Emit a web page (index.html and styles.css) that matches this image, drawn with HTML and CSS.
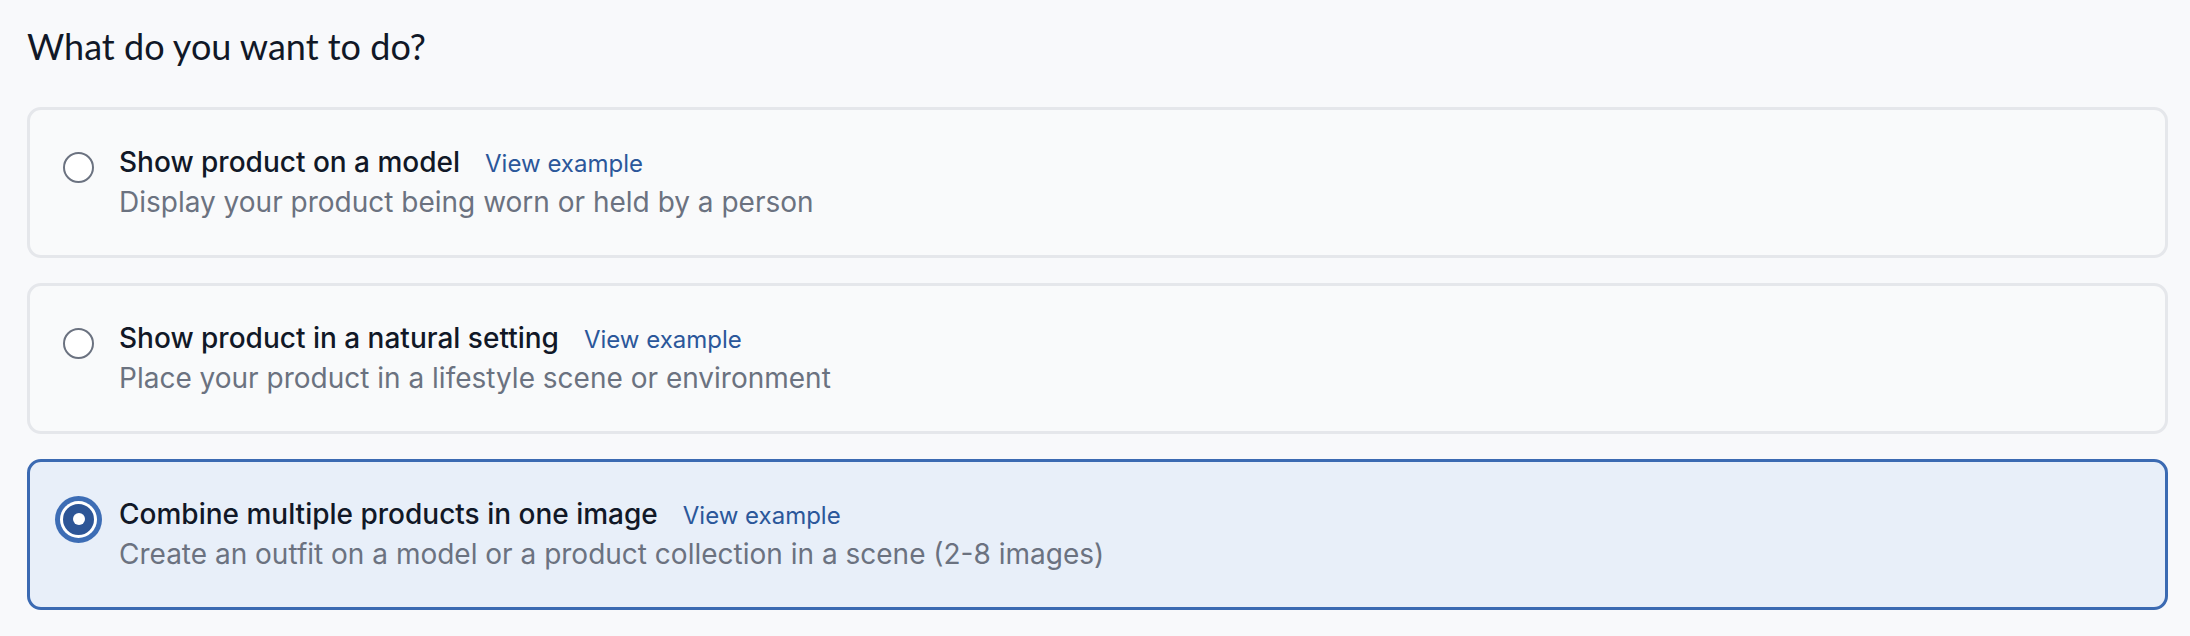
FILE: index.html
```html
<!DOCTYPE html>
<html lang="en">
<head>
<meta charset="utf-8">
<title>What do you want to do?</title>
<link rel="stylesheet" href="styles.css">
</head>
<body>
<main class="page">
  <h1 class="question">What do you want to do?</h1>
  <div class="options" role="radiogroup">
    <label class="option">
      <span class="radio"></span>
      <span class="option-body">
        <span class="option-head">
          <span class="option-title">Show product on a model</span>
          <a class="option-link" href="#">View example</a>
        </span>
        <span class="option-desc">Display your product being worn or held by a person</span>
      </span>
    </label>
    <label class="option">
      <span class="radio"></span>
      <span class="option-body">
        <span class="option-head">
          <span class="option-title">Show product in a natural setting</span>
          <a class="option-link" href="#">View example</a>
        </span>
        <span class="option-desc">Place your product in a lifestyle scene or environment</span>
      </span>
    </label>
    <label class="option option--selected">
      <span class="radio radio--checked"></span>
      <span class="option-body">
        <span class="option-head">
          <span class="option-title">Combine multiple products in one image</span>
          <a class="option-link" href="#">View example</a>
        </span>
        <span class="option-desc">Create an outfit on a model or a product collection in a scene (2-8 images)</span>
      </span>
    </label>
  </div>
</main>
</body>
</html>
```

FILE: styles.css
```css
html, body {
  margin: 0;
  padding: 0;
  background: #f8f9fb;
}

body {
  font-family: "Inter", "Noto Sans", sans-serif;
  color: #111827;
}

.page {
  padding: 23px 22px 0 27px;
}

.question {
  margin: 0;
  font-family: "Lato", "Open Sans", sans-serif;
  font-weight: 400;
  font-size: 36px;
  line-height: 46px;
  color: #111827;
}

.options {
  margin-top: 38px;
  display: flex;
  flex-direction: column;
  gap: 25px;
}

.option {
  box-sizing: border-box;
  height: 151px;
  display: flex;
  align-items: center;
  padding: 0 33px;
  background: #f9fafb;
  border: 3px solid #e5e7eb;
  border-radius: 14px;
  cursor: pointer;
}

.option--selected {
  background: #e8eff9;
  border-color: #3b6ab2;
}

.radio {
  box-sizing: border-box;
  flex: none;
  align-self: flex-start;
  margin-top: 41.5px;
  width: 31px;
  height: 31px;
  border-radius: 50%;
  border: 2px solid #6b7280;
  background: #ffffff;
  display: flex;
  align-items: center;
  justify-content: center;
}

.radio--checked {
  border-color: #2d5596;
  background: #2d5596;
  box-shadow: 0 0 0 3px #ffffff, 0 0 0 8px #3d6db5;
}

.radio--checked::after {
  content: "";
  width: 12px;
  height: 12px;
  border-radius: 50%;
  background: #ffffff;
}

.option-body {
  margin-left: 25px;
  display: flex;
  flex-direction: column;
}

.option-head {
  display: flex;
  align-items: baseline;
  line-height: 36px;
}

.option-title {
  font-size: 28px;
  font-weight: 500;
  color: #111827;
}

.option-link {
  margin-left: 25px;
  font-size: 24px;
  color: #2b579a;
  text-decoration: none;
}

.option-desc {
  font-size: 28px;
  line-height: 40px;
  color: #6b7280;
}
```
